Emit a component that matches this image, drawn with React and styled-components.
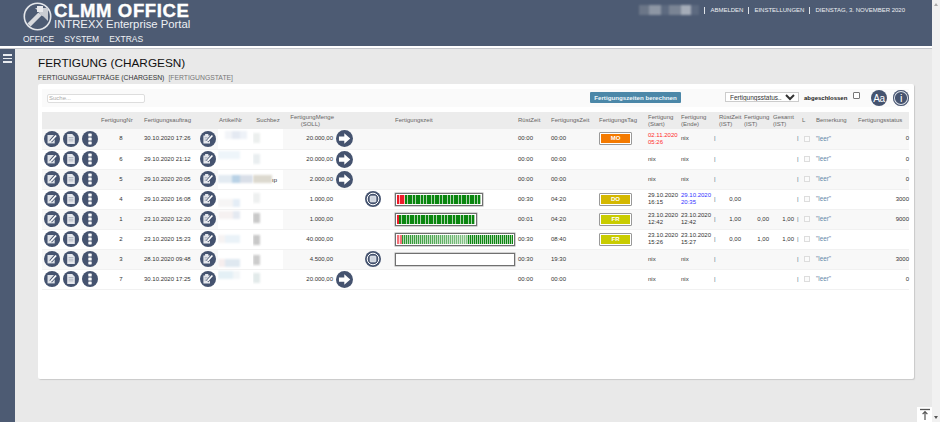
import React from "react";
import styled, { createGlobalStyle } from "styled-components";

const Global = createGlobalStyle`
  html, body { margin: 0; padding: 0; height: 100%; overflow: hidden; background: #e9e9e9; }
  body { font-family: "Liberation Sans", Arial, sans-serif; }
  * { box-sizing: border-box; }
`;

const DARK = "#45536f";

const Page = styled.div`display: flex; width: 940px; height: 422px; overflow: hidden; position: relative;`;
const Main = styled.div`width: 932px; display: flex; flex-direction: column;`;
const Track = styled.div`width: 8px; background: #f1f1f1; display: flex; flex-direction: column; justify-content: space-between; align-items: center; padding: 3px 0;`;
const TrackArrow = styled.span`
  width: 0; height: 0; border-left: 2px solid transparent; border-right: 2px solid transparent;
  ${p => (p.$up ? "border-bottom: 3px solid #aaa;" : "border-top: 3px solid #555;")}
`;

const Header = styled.header`
  height: 46px; background: #4d5b73; display: flex; justify-content: space-between; color: #fff; flex: none;
  padding: 2px 22px 0 23px;
`;
const Brand = styled.div`display: flex; flex-direction: column;`;
const BrandTop = styled.div`display: flex; align-items: flex-start; gap: 2px;`;
const BrandText = styled.div`display: flex; flex-direction: column; padding-top: 0;`;
const BrandName = styled.div`font-size: 18.5px; line-height: 17px; font-weight: 700; letter-spacing: 0.65px; white-space: nowrap; -webkit-text-stroke: 0.4px #fff;`;
const BrandSub = styled.div`font-size: 11.3px; line-height: 11px; white-space: nowrap; color: #eef0f3;`;
const Menu = styled.nav`display: flex; gap: 10px; margin-top: 3px; font-size: 8.5px; line-height: 10px; color: #f0f2f5;`;
const TopRight = styled.div`display: flex; align-items: center; height: 14px; margin-top: 1px; font-size: 6px; color: #eef0f3; white-space: nowrap;`;
const TopLink = styled.span`
  padding: 0 5px; border-left: 1px solid #dfe3e8; line-height: 7px;
`;
const UserBlur = styled.div`display: flex; width: 60px; height: 10px; margin-right: 5px; filter: blur(1.2px); align-items: stretch;`;
const Rule = styled.div`height: 2px; background: #fff; flex: none;`;
const ThinRule = styled.div`height: 1px; background: #c4c6cb; flex: none;`;

const Body = styled.div`flex: 1; display: flex; min-height: 0;`;
const Sidebar = styled.aside`width: 15px; background: #4d5b73; flex: none; padding: 5px 3px;`;
const Burger = styled.div`
  display: flex; flex-direction: column; gap: 2px;
  & > span { display: block; height: 1.5px; background: #e8ebef; }
`;
const Content = styled.main`flex: 1; padding: 7px 18px 0 23px;`;
const Title = styled.h1`margin: 0; font-size: 11.8px; line-height: 14px; font-weight: 400; color: #111;`;
const Crumbs = styled.div`margin-top: 3px; font-size: 6.8px; line-height: 9px; color: #333; display: flex; gap: 4px;`;
const CrumbMuted = styled.span`color: #777;`;

const Card = styled.section`
  margin-top: 2px; height: 295px; background: #fff; border-radius: 2px; box-shadow: 1px 1px 1px #c9c9c9;
  padding: 5px 5px 0 4px; width: 876px;
`;
const Toolbar = styled.div`
  height: 18px; background: #fafafa; display: flex; align-items: center; padding: 0 5px; margin-bottom: 5px;
  & > * { flex: none; }
`;
const Search = styled.input`
  width: 98px; height: 9px; border: 1px solid #ddd; border-radius: 2px; font: 6px "Liberation Sans", sans-serif;
  padding: 0 1px; background: #fff; &::placeholder { color: #aaa; }
`;
const CalcButton = styled.button`
  margin-left: 445px; width: 91px; height: 11px; background: #4b87a8; border: 0; border-radius: 1px; color: #eef6fa;
  font: 700 6.2px "Liberation Sans", sans-serif; padding: 0; white-space: nowrap; margin-top: -2px;
`;
const StatusSelect = styled.select`
  margin-left: 44px; width: 74px; height: 10px; font: 6.5px "Liberation Sans", sans-serif; border: 1px solid #ccc;
  background: #fff; color: #333; padding: 0; margin-top: -2px;
`;
const Closed = styled.span`margin-left: 5px; width: 44px; font-size: 6px; font-weight: 700; color: #222; margin-top: -1px; white-space: nowrap;`;
const ClosedBox = styled.input`
  appearance: none; width: 7px; height: 7px; margin: -5px 0 0 5px; border: 1px solid #777; border-radius: 1px; background: #fff;
`;
const RoundText = styled.div`
  width: 16px; height: 16px; border-radius: 50%; background: ${DARK}; color: #fff; margin-left: ${p => p.$ml}px;
  display: flex; align-items: center; justify-content: center; font-size: ${p => p.$fs}px; letter-spacing: -0.4px;
  ${p => p.$ring && "box-shadow: inset 0 0 0 1px #45536f, inset 0 0 0 1.9px #dfe3ea;"}
`;

const Table = styled.table`
  border-collapse: collapse; table-layout: fixed; width: 867px; font-size: 6px; color: #333;
`;
const Th = styled.th`
  height: 17px; padding: 0 ${p => p.$pr || 0}px 0 ${p => p.$pl || 0}px; background: #ececec; font-weight: 400; color: #666;
  line-height: 7px; text-align: ${p => p.$a || "left"}; font-size: 6px; white-space: nowrap;
`;
const Tr = styled.tr`
  height: 20px; background: ${p => (p.$odd ? "#f8f8f8" : "#fff")}; & > td { border-bottom: 1px solid #f1f1f1; }
`;
const Td = styled.td`
  padding: 0 ${p => p.$pr || 0}px 0 ${p => p.$pl || 0}px; text-align: ${p => p.$a || "left"}; line-height: 7px; overflow: visible;
  white-space: nowrap; color: ${p => p.$c || "#333"};
`;
const SmudgeCell = styled.td`padding: 0; background: #fff; overflow: hidden; position: relative;`;
const Smudge = styled.div`display: flex; height: 16px; filter: blur(1px); align-items: ${p => p.$al || "flex-start"};`;
const Swatch = styled.span`display: block; width: ${p => p.$w}px; height: ${p => p.$h || 8}px; background: ${p => p.$c}; flex: none; margin-top: ${p => p.$t || 0}px;`;
const TailText = styled.span`position: absolute; right: 6px; top: 7px; font-size: 6px; color: #333;`;
const Icons = styled.div`display: flex; gap: 3px; padding-left: 2px; align-items: center;`;
const IconCell = styled.div`display: flex; justify-content: center; align-items: center; padding-left: ${p => p.$pl || 0}px;`;
const Ist = styled.div`display: flex; justify-content: space-between; padding: 0 1px; color: #333;`;
const Pipe = styled.span`color: #4f6f7f;`;
const LCell = styled.div`display: flex; align-items: center; gap: 5px; padding-left: 3px;`;
const MiniBox = styled.span`display: block; width: 6px; height: 6px; border: 1px solid #ddd; background: #fbfbfb;`;
const Leer = styled.span`color: #5f88a8; font-size: 6.3px;`;

const TagBtn = styled.div`
  width: 33px; height: 13px; margin-left: 2px; padding: 1px; border: 1px solid #999; background: #fff; border-radius: 1px;
  & > span { display: flex; align-items: center; justify-content: center; height: 100%; background: ${p => p.$bg}; color: #fff; font-weight: 700; font-size: 6px; }
`;

const Bar = styled.div`
  width: ${p => p.$w}px; height: 13px; margin-left: 3px; border: 1px solid #707070; padding: 1px; background: #fff;
  box-shadow: 0 0 0 .5px #aaa; display: flex;
`;
const BarRed = styled.div`
  width: ${p => p.$w}px; flex: none; background: repeating-linear-gradient(90deg, #ee1a2a 0 2px, #ffb5b5 2px 2.7px);
  ${p => p.$soft && "opacity: .62;"}
`;
const BarGreen = styled.div`
  flex: 1;
  background:
    ${p => (p.$fade ? "linear-gradient(90deg, rgba(255,255,255,.12) 0, rgba(255,255,255,.3) 30%, rgba(255,255,255,.5) 58%, rgba(255,255,255,0) 60%)," : "")}
    repeating-linear-gradient(90deg, #0a860f 0 ${p => (p.$thin ? 1.2 : 2)}px, #a9d2a9 ${p => (p.$thin ? 1.2 : 2)}px ${p => (p.$thin ? 2 : 2.7)}px);
`;

const ToTop = styled.div`
  position: absolute; right: 8px; bottom: 0; width: 15px; height: 15px; background: #fff; display: flex; align-items: center; justify-content: center;
`;

const Circle = ({ children, size = 16 }) => (
  <svg width={size} height={size} viewBox="0 0 16 16" style={{ flex: "none", display: "block" }}>
    <circle cx="8" cy="8" r="8" fill={DARK} />
    {children}
  </svg>
);
const EditIcon = () => (
  <Circle>
    <path d="M3.5 4h7.2v8.4H3.5z" fill="#dfe2e8" />
    <path d="M6.6 10.4l5.3-5.9" stroke={DARK} strokeWidth="3.4" />
    <path d="M6.9 10.1l5.2-5.6" stroke="#fff" strokeWidth="1.7" />
    <path d="M5.7 11.3l.4-1.7 1.2 1.1z" fill="#fff" />
  </Circle>
);
const DocIcon = () => (
  <Circle>
    <path d="M4.2 3h5l2.6 2.7V13H4.2z" fill="#e6e8ed" />
    <path d="M5.6 6.5h4.8M5.6 8.2h4.8M5.6 9.9h4.8" stroke="#8f99aa" strokeWidth=".6" />
  </Circle>
);
const MoreIcon = () => (
  <Circle>
    <rect x="6.3" y="2.6" width="3.4" height="3" rx=".6" fill="#fff" />
    <rect x="6.3" y="6.5" width="3.4" height="3" rx=".6" fill="#fff" />
    <rect x="6.3" y="10.4" width="3.4" height="3" rx=".6" fill="#fff" />
  </Circle>
);
const NoteIcon = () => (
  <Circle>
    <path d="M3.4 4.4h1.7V3h3.2v1.4h1.7v8H3.4z" fill="#e6e8ed" />
    <path d="M4.6 6.4h3M4.6 8h2M4.6 9.6h1.4" stroke="#8f99aa" strokeWidth=".6" />
    <path d="M7.2 10.2l5-5.6" stroke={DARK} strokeWidth="3.2" />
    <path d="M7.5 9.9l4.9-5.4" stroke="#fff" strokeWidth="1.6" />
    <path d="M6.4 11l.4-1.6 1.1 1z" fill="#fff" />
  </Circle>
);
const ArrowIcon = () => (
  <Circle size={17}>
    <path d="M2.8 6h5V3l5.6 5-5.6 5v-3h-5z" fill="#fff" />
  </Circle>
);
const StopIcon = () => (
  <Circle>
    <circle cx="8" cy="8" r="5.8" fill="none" stroke="#fff" strokeWidth="1" />
    <rect x="5" y="5" width="6" height="6" rx="1" fill="#cfd5df" stroke="#eef0f4" strokeWidth=".6" />
  </Circle>
);
const Logo = () => (
  <svg width="29" height="29" viewBox="0 0 29 29" style={{ flex: "none" }}>
    <circle cx="14.5" cy="14.5" r="13.2" fill="none" stroke="#e4e6ea" strokeWidth="1.6" />
    <path d="M6 23l11-11" stroke="#d8dade" strokeWidth="4.4" />
    <path d="M12 6h13v13l-4.5-4.5-3.2-1.6-1.7-3.3z" fill="#c9ccd2" />
    <path d="M14 4h6v6h-6z" fill="#e8e9ec" />
  </svg>
);
const TopIcon = () => (
  <svg width="12" height="13" viewBox="0 0 12 13">
    <path d="M1 1.5h10" stroke="#555" strokeWidth="1.3" />
    <path d="M6 12V4M3.6 6.2L6 3.6l2.4 2.6" stroke="#555" strokeWidth="1.2" fill="none" />
  </svg>
);

const widths = [56,46,52,22,35,30,51,20,38,125,33,47,49,34,33,29,27,25,21,42,52];

const rows = [
  { nr: 8, auf: "30.10.2020 17:26", art: [["#fff",7],["#f2f4f8",7],["#e4e9f2",8],["#eef2f8",7]], such: [["#ecefee",7,"",2]], menge: "20.000,00", arrow: true, rz: "00:00", fz: "00:00", tag: ["MO","#f47a00"], start: ["02.11.2020","05:26"], startC: "#ff2b2b", ende: ["nix"], status: "0" },
  { nr: 6, auf: "29.10.2020 21:12", art: [["#eef5fa",22]], such: [["#e9eef0",7,"",3]], menge: "20.000,00", arrow: true, rz: "00:00", fz: "00:00", start: ["nix"], ende: ["nix"], status: "0" },
  { nr: 5, auf: "29.10.2020 20:05", mid: true, art: [["#e3ebf2",14],["#b9d2e6",8],["#d9dfe8",13]], such: [["#dcd9cf",19,"",4]], tail: "ıp", menge: "2.000,00", arrow: true, rz: "00:00", fz: "00:00", start: ["nix"], ende: ["nix"], status: "0" },
  { nr: 4, auf: "29.10.2020 16:08", art: [["#f6f5f5",15],["#e4edf6",7]], low: true, such: [["#eef0f0",7,"",2]], menge: "1.000,00", stop: true, bar: { w: 88, red: 8 }, rz: "00:30", fz: "04:20", tag: ["DO","#d4b800"], start: ["29.10.2020","16:15"], ende: ["29.10.2020","20:35"], endeC: "#3333ff", ist: ["0,00"], status: "3000" },
  { nr: 1, auf: "23.10.2020 12:20", art: [["#f6f1f1",15],["#e4e9f1",7]], such: [["#c9c9c9",7,"",2]], menge: "1.000,00", bar: { w: 82, red: 2 }, rz: "00:01", fz: "04:20", tag: ["FR","#c9cc00"], start: ["23.10.2020","12:42"], ende: ["23.10.2020","12:42"], ist: ["1,00","0,00","1,00"], status: "9000" },
  { nr: 2, auf: "23.10.2020 15:23", mid: true, art: [["#f6f3f3",7],["#eaf2f8",15]], such: [["#c8c8c8",7,"",4]], menge: "40.000,00", bar: { w: 120, red: 5, soft: true, thin: true, fade: true }, rz: "00:30", fz: "08:40", tag: ["FR","#c9cc00"], start: ["23.10.2020","15:26"], ende: ["23.10.2020","15:27"], ist: ["0,00","1,00","1,00"], status: "" },
  { nr: 3, auf: "28.10.2020 09:48", art: [["#f6eeee",7],["#dfe8f0",15]], low: true, such: [["#cccccc",7,"",4]], menge: "4.500,00", stop: true, bar: { w: 120, empty: true }, rz: "00:30", fz: "19:30", start: ["nix"], ende: ["nix"], status: "3000" },
  { nr: 7, auf: "30.10.2020 17:25", art: [["#e4f0f6",15],["#f2f6f8",7]], such: [["#e2eaea",7,"",2]], menge: "20.000,00", arrow: true, rz: "00:00", fz: "00:00", start: ["nix"], ende: ["nix"], status: "0" },
];

const Lines = ({ v }) => v.map((l, i) => <div key={i}>{l}</div>);

const Row = ({ r, odd }) => (
  <Tr $odd={odd}>
    <Td><Icons><EditIcon /><DocIcon /><MoreIcon /></Icons></Td>
    <Td $a="center">{r.nr}</Td>
    <Td>{r.auf}</Td>
    <Td><IconCell $pl={2}><NoteIcon /></IconCell></Td>
    <SmudgeCell>
      <Smudge $al={r.low ? "flex-end" : r.mid ? "center" : "flex-start"}>
        {r.art.map(([c, w], i) => <Swatch key={i} $c={c} $w={w} />)}
      </Smudge>
    </SmudgeCell>
    <SmudgeCell>
      <Smudge>
        {r.such.map(([c, w, , t], i) => <Swatch key={i} $c={c} $w={w} $h={r.tail ? 8 : 10} $t={t} />)}
      </Smudge>
      {r.tail && <TailText>{r.tail}</TailText>}
    </SmudgeCell>
    <Td $a="right" $pr={1}>{r.menge}</Td>
    <Td>{r.arrow && <IconCell><ArrowIcon /></IconCell>}</Td>
    <Td>{r.stop && <IconCell><StopIcon /></IconCell>}</Td>
    <Td>
      {r.bar && (
        <Bar $w={r.bar.w}>
          {!r.bar.empty && <BarRed $w={r.bar.red} $soft={r.bar.soft} />}
          {!r.bar.empty && <BarGreen $thin={r.bar.thin} $fade={r.bar.fade} />}
        </Bar>
      )}
    </Td>
    <Td $pl={1}>{r.rz}</Td>
    <Td $pl={1}>{r.fz}</Td>
    <Td>{r.tag && <TagBtn $bg={r.tag[1]}><span>{r.tag[0]}</span></TagBtn>}</Td>
    <Td $pl={2} $c={r.startC}><Lines v={r.start} /></Td>
    <Td $pl={1} $c={r.endeC}><Lines v={r.ende} /></Td>
    <Td><Ist><Pipe>|</Pipe><span>{r.ist && r.ist[0]}</span></Ist></Td>
    <Td $a="right">{r.ist && r.ist[1]}</Td>
    <Td $a="right">{r.ist && r.ist[2]}</Td>
    <Td><LCell><Pipe>|</Pipe><MiniBox /></LCell></Td>
    <Td $pl={1}><Leer>"leer"</Leer></Td>
    <Td $a="right">{r.status}</Td>
  </Tr>
);

export default function App() {
  return (
    <Page>
      <Global />
      <Main>
        <Header>
          <Brand>
            <BrandTop>
              <Logo />
              <BrandText>
                <BrandName>CLMM OFFICE</BrandName>
                <BrandSub>INTREXX Enterprise Portal</BrandSub>
              </BrandText>
            </BrandTop>
            <Menu><span>OFFICE</span><span>SYSTEM</span><span>EXTRAS</span></Menu>
          </Brand>
          <TopRight>
            <UserBlur>
              <Swatch $c="#6b7688" $w={10} $h={10} />
              <Swatch $c="#8d96a4" $w={12} $h={10} />
              <Swatch $c="#5d6a80" $w={8} $h={10} />
              <Swatch $c="#7a8494" $w={12} $h={10} />
              <Swatch $c="#a5acb8" $w={10} $h={10} />
              <Swatch $c="#5d6a80" $w={8} $h={10} />
            </UserBlur>
            <TopLink>ABMELDEN</TopLink>
            <TopLink>EINSTELLUNGEN</TopLink>
            <TopLink>DIENSTAG, 3. NOVEMBER 2020</TopLink>
          </TopRight>
        </Header>
        <Rule />
        <ThinRule />
        <Body>
          <Sidebar><Burger><span /><span /><span /></Burger></Sidebar>
          <Content>
            <Title>FERTIGUNG (CHARGESN)</Title>
            <Crumbs><span>FERTIGUNGSAUFTRÄGE (CHARGESN)</span><CrumbMuted>[FERTIGUNGSTATE]</CrumbMuted></Crumbs>
            <Card>
              <Toolbar>
                <Search placeholder="Suche..." />
                <CalcButton>Fertigungszeiten berechnen</CalcButton>
                <StatusSelect defaultValue="s"><option value="s">Fertigungsstatus...</option></StatusSelect>
                <Closed>abgeschlossen</Closed>
                <ClosedBox type="checkbox" />
                <RoundText $ml={11} $fs={10}>Aa</RoundText>
                <RoundText $ml={6} $fs={11} $ring>i</RoundText>
              </Toolbar>
              <Table>
                <colgroup>{widths.map((w, i) => <col key={i} style={{ width: w }} />)}</colgroup>
                <thead>
                  <tr>
                    <Th />
                    <Th $pl={3}>FertigungNr</Th>
                    <Th>Fertigungsauftrag</Th>
                    <Th />
                    <Th $pl={1}>ArtikelNr</Th>
                    <Th $a="center">Suchbez</Th>
                    <Th $a="right"><div>FertigungMenge</div><div style={{ paddingRight: 14 }}>(SOLL)</div></Th>
                    <Th />
                    <Th />
                    <Th $pl={3}>Fertigungszeit</Th>
                    <Th $pl={1}>RüstZeit</Th>
                    <Th $pl={1}>FertigungsZeit</Th>
                    <Th $pl={2}>FertigungsTag</Th>
                    <Th $pl={2}>Fertigung<br />(Start)</Th>
                    <Th $pl={1}>Fertigung<br />(Ende)</Th>
                    <Th $pl={6}>RüstZeit<br />(IST)</Th>
                    <Th $pl={2}>Fertigung<br />(IST)</Th>
                    <Th $pl={4}>Gesamt<br />(IST)</Th>
                    <Th $pl={8}>L</Th>
                    <Th $pl={1}>Bemerkung</Th>
                    <Th $pl={1}>Fertigungsstatus</Th>
                  </tr>
                </thead>
                <tbody>
                  {rows.map((r, i) => <Row key={r.nr} r={r} odd={i % 2 === 0} />)}
                </tbody>
              </Table>
            </Card>
          </Content>
        </Body>
      </Main>
      <Track><TrackArrow $up /><TrackArrow /></Track>
      <ToTop><TopIcon /></ToTop>
    </Page>
  );
}
